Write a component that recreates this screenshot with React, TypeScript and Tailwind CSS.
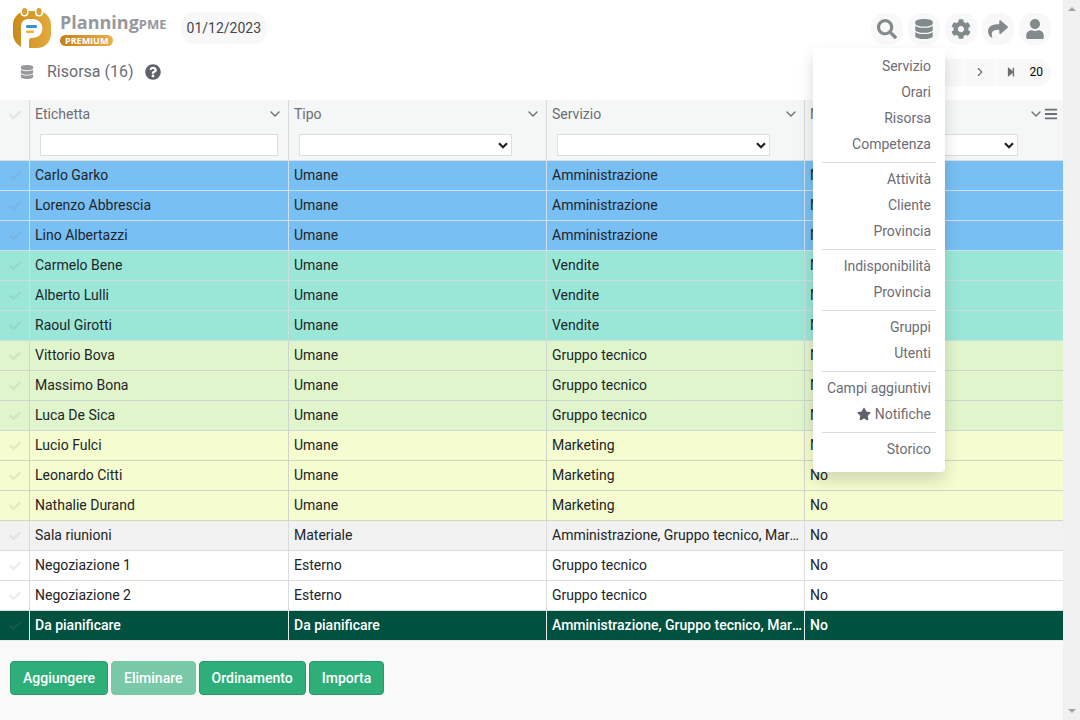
import { useState, type ReactNode } from "react";
import {
  FaBars,
  FaCheck,
  FaCog,
  FaDatabase,
  FaQuestionCircle,
  FaSearch,
  FaShare,
  FaStar,
  FaStepForward,
  FaUser,
} from "react-icons/fa";
import { LuChevronDown, LuChevronRight } from "react-icons/lu";

type Resource = {
  label: string;
  type: string;
  service: string;
  tone: string;
};

const BLUE = "bg-[#78bff3] border-[#cfe0ee]";
const TEAL = "bg-[#9ae7d8] border-[#c9dfdb]";
const GREEN = "bg-[#e0f5cb] border-[#cfd6d0]";
const YELLOW = "bg-[#f5fccf] border-[#cfd6c8]";
const GREY = "bg-[#f2f2f2] border-[#d9dcdf]";
const WHITE = "bg-white border-[#d9dcdf]";
const DARK = "bg-[#00513f] border-[#e4ece9] text-white font-medium";

const SHARED = "Amministrazione, Gruppo tecnico, Marketing";

const resources: Resource[] = [
  { label: "Carlo Garko", type: "Umane", service: "Amministrazione", tone: BLUE },
  { label: "Lorenzo Abbrescia", type: "Umane", service: "Amministrazione", tone: BLUE },
  { label: "Lino Albertazzi", type: "Umane", service: "Amministrazione", tone: BLUE },
  { label: "Carmelo Bene", type: "Umane", service: "Vendite", tone: TEAL },
  { label: "Alberto Lulli", type: "Umane", service: "Vendite", tone: TEAL },
  { label: "Raoul Girotti", type: "Umane", service: "Vendite", tone: TEAL },
  { label: "Vittorio Bova", type: "Umane", service: "Gruppo tecnico", tone: GREEN },
  { label: "Massimo Bona", type: "Umane", service: "Gruppo tecnico", tone: GREEN },
  { label: "Luca De Sica", type: "Umane", service: "Gruppo tecnico", tone: GREEN },
  { label: "Lucio Fulci", type: "Umane", service: "Marketing", tone: YELLOW },
  { label: "Leonardo Citti", type: "Umane", service: "Marketing", tone: YELLOW },
  { label: "Nathalie Durand", type: "Umane", service: "Marketing", tone: YELLOW },
  { label: "Sala riunioni", type: "Materiale", service: SHARED, tone: GREY },
  { label: "Negoziazione 1", type: "Esterno", service: "Gruppo tecnico", tone: WHITE },
  { label: "Negoziazione 2", type: "Esterno", service: "Gruppo tecnico", tone: WHITE },
  { label: "Da pianificare", type: "Da pianificare", service: SHARED, tone: DARK },
];

const menuGroups = [
  ["Servizio", "Orari", "Risorsa", "Competenza"],
  ["Attività", "Cliente", "Provincia"],
  ["Indisponibilità", "Provincia"],
  ["Gruppi", "Utenti"],
  ["Campi aggiuntivi", "Notifiche"],
  ["Storico"],
];

function Logo() {
  return (
    <a href="#" className="flex items-start gap-2">
      <svg viewBox="0 0 40 41" className="h-[41px] w-10" aria-hidden="true">
        <defs>
          <linearGradient id="gold" x1="0" y1="0" x2="1" y2="0">
            <stop offset="0" stopColor="#c98a1c" />
            <stop offset="1" stopColor="#e5aa3c" />
          </linearGradient>
        </defs>
        <rect x="1" y="3" width="38" height="37" rx="14" fill="url(#gold)" />
        <path d="M8.500 0v4.500a4 4 0 0 0 8 0V0z" fill="#fff" />
        <path d="M23 0v4.500a4 4 0 0 0 8 0V0z" fill="#fff" />
        <rect x="10" y="0" width="5" height="7" rx="2.500" fill="#dca036" />
        <rect x="24.500" y="0" width="5" height="7" rx="2.500" fill="#dca036" />
        <path
          d="M9 41V18a7 7 0 0 1 7-7h5a9.500 9.500 0 0 1 0 19h-1.500a2.500 2.500 0 0 0-2.500 2.500V41z"
          fill="#fff"
        />
        <rect x="14" y="17" width="11" height="3" rx="1" fill="#3d8fd6" />
        <rect x="14" y="22.500" width="8" height="2.500" rx="1" fill="#f3b13c" />
      </svg>
      <span className="flex flex-col items-start pt-1">
        <span className="flex items-baseline font-['Open_Sans',sans-serif] text-lg leading-5 font-bold text-[#97989c]">
          Planning<span className="text-[13px] leading-5">PME</span>
        </span>
        <span className="mt-px rounded-full bg-linear-to-r from-[#c5811b] to-[#e8b04a] px-[5px] font-['Open_Sans',sans-serif] text-[9px] leading-[11px] font-bold text-white">
          PREMIUM
        </span>
      </span>
    </a>
  );
}

function ToolButton({ label, onClick, children }: { label: string; onClick?: () => void; children: ReactNode }) {
  return (
    <button
      type="button"
      aria-label={label}
      onClick={onClick}
      className="flex size-8 items-center justify-center rounded-[14px] bg-[#f8f8f8] text-xl text-[#828a8b]"
    >
      {children}
    </button>
  );
}

function DataMenu() {
  return (
    <nav className="absolute top-[35px] -right-[5px] z-10 w-[132px] rounded-b bg-white pt-[5px] pb-2.5 shadow-[0_8px_16px_rgba(0,0,0,0.15)]">
      {menuGroups.map((group, index) => (
        <div key={index}>
          {index > 0 && <hr className="mx-[9px] mt-[5px] mb-[3px] border-[#d9dcdf]" />}
          {group.map((item) => (
            <a
              key={item}
              href="#"
              className="flex h-[26px] items-center justify-end gap-1 pr-3.5 whitespace-nowrap text-[#6c6d75]"
            >
              {item === "Notifiche" && <FaStar className="text-[#5f616b]" />}
              {item}
            </a>
          ))}
        </div>
      ))}
    </nav>
  );
}

function HeaderCell({ title, last, children }: { title: string; last?: boolean; children: ReactNode }) {
  return (
    <th className="border-b border-l border-[#d9dcdf] p-0 align-top font-normal">
      <div className="flex h-[27px] items-center justify-between pr-[5px] pl-[5px]">
        <span>{title}</span>
        <span className="flex items-center">
          <LuChevronDown className="size-4" />
          {last && <FaBars className="size-3.5" />}
        </span>
      </div>
      <div className={last ? "pt-[7px] pr-[45px] pl-2.5" : "pt-[7px] pr-[34px] pl-2.5"}>{children}</div>
    </th>
  );
}

function FilterSelect({ label }: { label: string }) {
  return (
    <div className="relative">
      <select aria-label={label} className="block h-[22px] w-full appearance-none border border-[#dcdfe1] bg-white">
        <option value=""></option>
      </select>
      <svg viewBox="0 0 10 7" className="pointer-events-none absolute top-2 right-1 h-[7px] w-2.5" aria-hidden="true">
        <path d="M1 1.200l4 4 4-4" fill="none" stroke="#222" strokeWidth="2.200" />
      </svg>
    </div>
  );
}

function Scrollbar() {
  return (
    <div className="flex w-[17px] shrink-0 flex-col items-center justify-between bg-[#f0f0f0] py-1.5" aria-hidden="true">
      <svg viewBox="0 0 8 5" className="h-[5px] w-2"><path d="M0 5l4-4 4 4z" fill="#a3a3a3" /></svg>
      <svg viewBox="0 0 8 5" className="h-[5px] w-2"><path d="M0 0l4 4 4-4z" fill="#a3a3a3" /></svg>
    </div>
  );
}

const actions = ["Aggiungere", "Eliminare", "Ordinamento", "Importa"];

export default function App() {
  const [menuOpen, setMenuOpen] = useState(true);

  return (
    <div className="flex min-h-screen bg-[#f9f9f9] font-[Roboto,sans-serif] text-sm text-[#212529]">
      <main className="min-w-0 flex-1">
        <header className="bg-white pb-3.5">
          <div className="flex items-start justify-between px-3 pt-2">
            <div className="flex items-start gap-3.5">
              <Logo />
              <time className="mt-1 flex h-8 items-center rounded-[14px] bg-[#f8f8f8] px-1.5 text-[#45474d]">
                01/12/2023
              </time>
            </div>
            <div className="flex gap-[5px] pt-[5px]">
              <ToolButton label="Cerca"><FaSearch /></ToolButton>
              <div className="relative">
                <ToolButton label="Dati" onClick={() => setMenuOpen(!menuOpen)}><FaDatabase /></ToolButton>
                {menuOpen && <DataMenu />}
              </div>
              <ToolButton label="Impostazioni"><FaCog /></ToolButton>
              <ToolButton label="Condividi"><FaShare /></ToolButton>
              <ToolButton label="Utente"><FaUser /></ToolButton>
            </div>
          </div>
          <div className="flex items-center justify-between pt-[9px] pr-3 pl-5">
            <h1 className="flex h-[28px] items-center text-base text-[#6c6d75]">
              <FaDatabase className="mr-[13px] size-3.5 text-[#97989c]" />
              Risorsa (16)
              <FaQuestionCircle className="ml-[11px] text-[#5f616b]" />
            </h1>
            <div className="flex h-[27px] overflow-hidden rounded-[14px] bg-[#f8f8f8] text-xs text-[#6c6d75]">
              <span className="w-[98px]" />
              <button type="button" aria-label="Pagina successiva" className="flex w-[31px] items-center justify-center border-l border-white">
                <LuChevronRight className="size-3.5" />
              </button>
              <button type="button" aria-label="Ultima pagina" className="flex w-[31px] items-center justify-center border-l border-white">
                <FaStepForward className="size-2.5" />
              </button>
              <span className="flex items-center pr-2 pl-1 text-black">20</span>
            </div>
          </div>
        </header>

        <table className="w-full table-fixed border-separate border-spacing-0 text-left">
          <colgroup>
            <col className="w-[29px]" />
            <col className="w-[259px]" />
            <col className="w-[258px]" />
            <col className="w-[258px]" />
            <col />
          </colgroup>
          <thead>
            <tr className="h-[61px] bg-[#f5f7f7] text-[#6c6d75]">
              <th className="border-b border-[#d9dcdf] p-0 align-top">
                <div className="flex h-[29px] items-center justify-center"><FaCheck className="size-3 text-[#e3e5e6]" /></div>
              </th>
              <HeaderCell title="Etichetta">
                <input aria-label="Etichetta" className="-mr-6 block h-[22px] w-[calc(100%+24px)] border border-[#dcdfe1] bg-white px-1" />
              </HeaderCell>
              <HeaderCell title="Tipo"><FilterSelect label="Tipo" /></HeaderCell>
              <HeaderCell title="Servizio"><FilterSelect label="Servizio" /></HeaderCell>
              <HeaderCell title="Notifiche" last><FilterSelect label="Notifiche" /></HeaderCell>
            </tr>
          </thead>
          <tbody>
            {resources.map((row) => (
              <tr key={row.label} className={`h-[30px] ${row.tone}`}>
                <td className="border-b border-inherit p-0">
                  <FaCheck className="mx-auto size-3 text-[#828a8b]/15" />
                </td>
                {[row.label, row.type, row.service, "No"].map((value, index) => (
                  <td key={index} className="truncate border-b border-l border-inherit pt-0 pr-0.5 pb-0.5 pl-[5px]">
                    {value}
                  </td>
                ))}
              </tr>
            ))}
          </tbody>
        </table>

        <div className="flex gap-[3px] px-2.5 py-5">
          {actions.map((action) => (
            <button
              key={action}
              type="button"
              disabled={action === "Eliminare"}
              className="h-[34px] rounded border border-[#289a69] bg-[#2eaf7a] px-3 pb-px font-medium text-white disabled:border-[#79c9a8] disabled:bg-[#79c9a8]"
            >
              {action}
            </button>
          ))}
        </div>
      </main>
      <Scrollbar />
    </div>
  );
}
